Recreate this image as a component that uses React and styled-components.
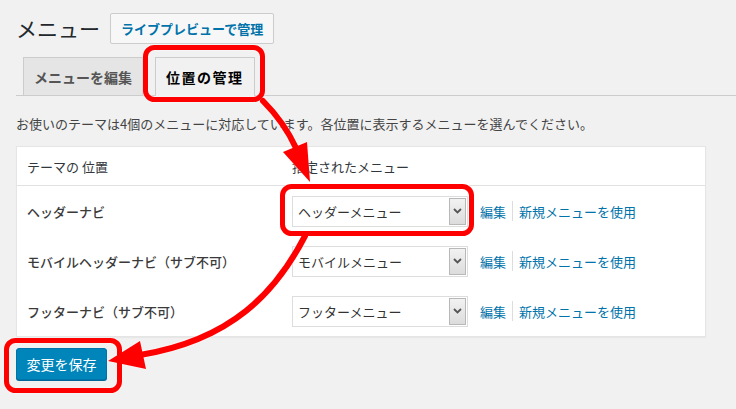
import { createGlobalStyle, styled } from "styled-components";

const GlobalStyle = createGlobalStyle`
  html, body {
    margin: 0;
    padding: 0;
    background: #f1f1f1;
  }
  body {
    font-family: "Noto Sans CJK JP", "Noto Sans", sans-serif;
    font-size: 13px;
    color: #444;
  }
`;

const locations = [
  { label: "ヘッダーナビ", menu: "ヘッダーメニュー" },
  { label: "モバイルヘッダーナビ（サブ不可）", menu: "モバイルメニュー" },
  { label: "フッターナビ（サブ不可）", menu: "フッターメニュー" },
];

const App = () => {
  return (
    <>
      <GlobalStyle />
      <Page>
        <TitleRow>
          <Heading>メニュー</Heading>
          <TitleButton>ライブプレビューで管理</TitleButton>
        </TitleRow>

        <Tabs>
          <Tab>メニューを編集</Tab>
          <Tab $active>位置の管理</Tab>
        </Tabs>

        <Description>
          お使いのテーマは4個のメニューに対応しています。各位置に表示するメニューを選んでください。
        </Description>

        <Table>
          <HeadCell>テーマの 位置</HeadCell>
          <HeadCell>指定されたメニュー</HeadCell>
          {locations.map((loc) => (
            <Row key={loc.label}>
              <LabelCell>{loc.label}</LabelCell>
              <MenuCell>
                <Select>
                  <span>{loc.menu}</span>
                  <SelectArrow>
                    <svg width="9" height="6" viewBox="0 0 9 6">
                      <path d="M1 1 L4.5 4.5 L8 1" fill="none" stroke="#555" strokeWidth="1.8" />
                    </svg>
                  </SelectArrow>
                </Select>
                <Links>
                  <Link>編集</Link>
                  <Sep />
                  <Link>新規メニューを使用</Link>
                </Links>
              </MenuCell>
            </Row>
          ))}
        </Table>

        <SaveButton>変更を保存</SaveButton>

        <Annotations width="736" height="409" viewBox="0 0 736 409">
          <g fill="none" stroke="#ff0000" strokeWidth="5">
            <rect x="145.5" y="47.5" width="117" height="52" rx="9" />
            <rect x="282.5" y="186.5" width="189" height="47" rx="9" />
            <rect x="6.5" y="340.5" width="113" height="50" rx="9" />
          </g>
          <g fill="none" stroke="#ff0000" strokeWidth="6" strokeLinecap="round">
            <path d="M263 101 Q284 122 296 148" />
            <path d="M305 236 C276 292 232 340 140 355" />
          </g>
          <g fill="#ff0000">
            <polygon points="283,152 307,142 310,182" />
            <polygon points="108,361 140,341 146,369" />
          </g>
        </Annotations>
      </Page>
    </>
  );
};

export default App;

const Page = styled.div`
  position: relative;
  width: 736px;
  height: 409px;
  padding: 13px 0 0 16px;
  box-sizing: border-box;
  overflow: hidden;
`;

const TitleRow = styled.div`
  display: flex;
  align-items: center;
  gap: 10px;
  height: 31px;
`;

const Heading = styled.h1`
  margin: 0;
  font-size: 21px;
  font-weight: 400;
  color: #23282d;
  line-height: 1;
`;

const TitleButton = styled.div`
  height: 31px;
  box-sizing: border-box;
  padding: 0 10px;
  display: flex;
  align-items: center;
  background: #f7f7f7;
  border: 1px solid #ccc;
  border-radius: 2px;
  color: #0073aa;
  font-size: 13px;
  font-weight: 600;
`;

const Tabs = styled.div`
  display: flex;
  align-items: flex-end;
  gap: 12px;
  margin-top: 13px;
  padding-left: 7px;
  border-bottom: 1px solid #ccc;
`;

const Tab = styled.div`
  box-sizing: border-box;
  padding: 0 10px;
  display: flex;
  align-items: center;
  border: 1px solid #ccc;
  border-bottom: none;
  margin-bottom: ${(p) => (p.$active ? "-1px" : "0")};
  height: ${(p) => (p.$active ? "39px" : "38px")};
  background: ${(p) => (p.$active ? "#f1f1f1" : "#e5e5e5")};
  color: ${(p) => (p.$active ? "#000" : "#555")};
  font-size: 14px;
  font-weight: ${(p) => (p.$active ? 700 : 600)};
  letter-spacing: ${(p) => (p.$active ? "1.5px" : "0")};
`;

const Description = styled.p`
  margin: 19px 0 0;
  line-height: 18px;
  font-size: 13px;
  color: #444;
`;

const Table = styled.div`
  display: grid;
  grid-template-columns: 265px 1fr;
  width: 690px;
  box-sizing: border-box;
  margin-top: 13px;
  background: #fff;
  border: 1px solid #e5e5e5;
  box-shadow: 0 1px 1px rgba(0, 0, 0, 0.04);
`;

const HeadCell = styled.div`
  padding: 10px;
  height: 39px;
  box-sizing: border-box;
  display: flex;
  align-items: center;
  border-bottom: 1px solid #e1e1e1;
  color: #32373c;
  font-size: 13px;
`;

const Row = styled.div`
  display: contents;
`;

const LabelCell = styled.div`
  height: 50px;
  padding: 0 10px;
  box-sizing: border-box;
  display: flex;
  align-items: center;
  font-weight: 500;
  font-size: 13px;
  color: #3a3a3a;
`;

const MenuCell = styled.div`
  height: 50px;
  padding: 0 10px;
  box-sizing: border-box;
  display: flex;
  align-items: center;
  gap: 12px;
`;

const Select = styled.div`
  width: 176px;
  height: 31px;
  box-sizing: border-box;
  display: flex;
  align-items: stretch;
  justify-content: space-between;
  border: 1px solid #ddd;
  background: #fff;
  font-size: 13px;
  color: #333;

  span {
    display: flex;
    align-items: center;
    padding-left: 5px;
  }
`;

const SelectArrow = styled.div`
  width: 15px;
  margin: 1px;
  display: flex;
  align-items: center;
  justify-content: center;
  background: linear-gradient(#f2f2f2, #dcdcdc);
  border: 1px solid #b8b8b8;
`;

const Links = styled.div`
  display: flex;
  align-items: center;
  gap: 6px;
`;

const Link = styled.span`
  color: #0073aa;
  font-size: 13px;
`;

const Sep = styled.span`
  width: 1px;
  height: 20px;
  background: #ddd;
`;

const SaveButton = styled.div`
  width: 91px;
  height: 32px;
  box-sizing: border-box;
  margin-top: 11px;
  display: flex;
  align-items: center;
  justify-content: center;
  background: #0085ba;
  border: 1px solid #0073aa;
  border-radius: 3px;
  box-shadow: 0 1px 0 #006799;
  color: #fff;
  font-size: 14px;
`;

const Annotations = styled.svg`
  position: absolute;
  top: 0;
  left: 0;
  pointer-events: none;
  filter: drop-shadow(0 0 1px rgba(255, 255, 255, 0.9));
`;
